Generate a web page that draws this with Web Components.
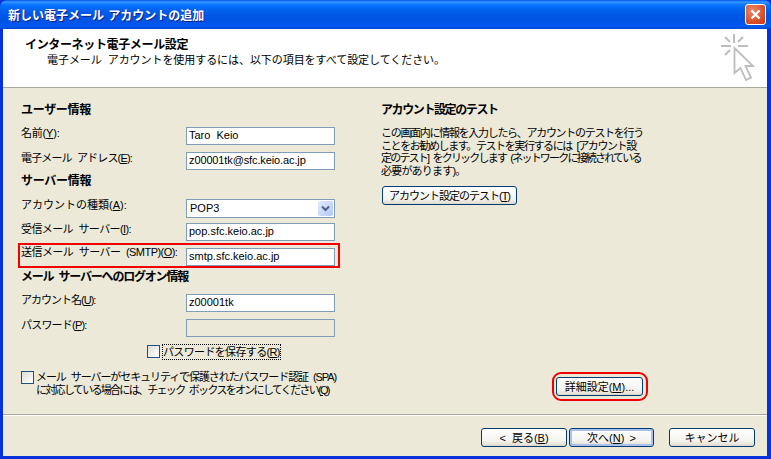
<!DOCTYPE html>
<html><head><meta charset="utf-8"><style>
html,body{margin:0;padding:0;background:#0831d9}
body{width:771px;height:459px;overflow:hidden;font:11px/14px "Liberation Sans","Noto Sans CJK JP",sans-serif;color:#000;word-spacing:3px}
</style></head><body>
<xp-dialog>
  <span slot="title">新しい電子メール アカウントの追加</span>
  <span slot="heading">インターネット電子メール設定</span>
  <span slot="sub">電子メール アカウントを使用するには、以下の項目をすべて設定してください。</span>
  <account-form slot="left"></account-form>
  <test-panel slot="right"></test-panel>
  <xp-button slot="footer" style="--w:86px">&lt; 戻る(<u>B</u>)</xp-button>
  <xp-button slot="footer" default style="--w:85px;margin-left:2px;word-spacing:2px">次へ(<u>N</u>) &gt;</xp-button>
  <xp-button slot="footer" style="--w:86px;margin-left:15px">キャンセル</xp-button>
</xp-dialog>
<script>
function def(name, html){
  customElements.define(name, class extends HTMLElement{
    constructor(){super();this.attachShadow({mode:'open'}).innerHTML=html;}
  });
}
def('xp-dialog',`<style>
:host{display:flex;flex-direction:column;width:771px;height:459px;box-sizing:border-box;background:#0831d9;border-radius:7px 7px 0 0;overflow:hidden}
.bar{flex:none;height:29px;box-sizing:border-box;display:flex;align-items:center;justify-content:space-between;padding:0 5px 0 8px;color:#fff;font-size:12px;font-weight:700;word-spacing:1px;text-shadow:1px 1px 0 #0f1f8f;
background:linear-gradient(#0058ee 0,#3593ff 2px,#288eff 3px,#127dff 4px,#036ffc 6px,#0262ee 10px,#0057e5 15px,#0054e3 20px,#0055eb 24px,#005bf5 26px,#0252d8 28px,#003dd7 29px)}
.bar>slot{display:block;padding-top:2px}
.x{width:21px;height:21px;box-sizing:border-box;border:1px solid #fff;border-radius:3px;background:radial-gradient(circle at 35% 30%,#e98a6e,#d9512b 60%,#c23a13);display:flex;align-items:center;justify-content:center}
.main{flex:1;display:flex;flex-direction:column;margin:0 4px 3px 3px;background:#ece9d8;min-height:0}
.head{flex:none;height:59px;box-sizing:border-box;background:#fff;border-bottom:1px solid #aca899;position:relative;padding:9px 0 0 22px;line-height:14px}
.head .t{font-weight:700;font-size:12px;letter-spacing:-.35px;display:block;height:14px}
.head .s{display:block;padding-left:22px;margin-top:1px;letter-spacing:-.06px}
.head svg{position:absolute;left:717px;top:4px}
.body{flex:1;display:flex;margin-top:1px;min-height:0}
.l{flex:none;width:378px}
.r{flex:1}
.foot{flex:none;height:42px;box-sizing:border-box;border-top:1px solid #aca899;box-shadow:inset 0 1px 0 #fff;padding:13px 12px 0 0;display:flex;justify-content:flex-end;align-items:flex-start}
</style>
<div class="bar"><slot name="title"></slot><div class="x"><svg width="13" height="13" viewBox="0 0 13 13"><path d="M2.5 2.5l8 8M10.500 2.500l-8 8" stroke="#fff" stroke-width="2.4" fill="none"/></svg></div></div>
<div class="main">
 <div class="head"><span class="t"><slot name="heading"></slot></span><span class="s"><slot name="sub"></slot></span>
  <svg width="40" height="52" viewBox="0 0 40 52" fill="none" stroke="#bdbdbd" stroke-width="2"><path d="M14 1v9M1 13h10M18 13h10M5 4l5 5M23 4l-5 5M5 22l5-5"/><path d="M14.500 15v25l6-5 5.500 12 5-2.500-5.500-11.500h7.500z" stroke-width="1.800"/></svg>
 </div>
 <div class="body"><div class="l"><slot name="left"></slot></div><div class="r"><slot name="right"></slot></div></div>
 <div class="foot"><slot name="footer"></slot></div>
</div>`);
def('xp-button',`<style>
:host{display:inline-flex;align-items:center;justify-content:center;width:var(--w,86px);height:19px;box-sizing:border-box;border:1px solid #003c74;border-radius:3px;background:linear-gradient(#fff,#f4f3ee 70%,#e3e0d3 95%,#d6d0c5);line-height:14px;white-space:nowrap}
:host([default]){box-shadow:inset 0 0 0 2px #a9c2ea}
</style><slot></slot>`);
def('form-row',`<style>
:host{display:flex;height:18px;position:relative;margin-left:18px}
:host([hl])::after{content:"";position:absolute;left:-3px;top:-5px;width:322px;height:25px;box-sizing:border-box;border:2px solid #f00000;pointer-events:none}
.lb{flex:none;width:165px;white-space:nowrap;line-height:14px;margin-top:var(--lb,-1px);letter-spacing:var(--ls,0)}
.f{flex:none;width:149px;box-sizing:border-box;border:1px solid #7f9db9;background:#fff;height:18px;line-height:15px;padding-left:2px;white-space:nowrap;position:relative;display:block}
:host([disabled]) .f{background:#ece9d8}
:host([combo]) .f{height:19px;padding-left:3px;line-height:16px}
.c{display:none;position:absolute;right:1px;top:1px;width:15px;height:15px;border-radius:2px;background:linear-gradient(135deg,#e1eafe,#b5c8f5)}
:host([combo]) .c{display:block}
</style><span class="lb"><slot name="label"></slot></span><span class="f"><slot></slot><span class="c"><svg width="15" height="15" viewBox="0 0 15 15"><path d="M4 5.500l3.500 3.500 3.500-3.500" fill="none" stroke="#4d6185" stroke-width="2"/></svg></span></span>`);
def('xp-check',`<style>
:host{display:flex;align-items:flex-start}
.b{flex:none;width:13px;height:13px;box-sizing:border-box;border:1px solid #1c5180;background:linear-gradient(135deg,#dcdcd7,#fff);margin-right:var(--g,2px)}
.t{white-space:nowrap;line-height:var(--lh,14px)}
:host([focus]) .t{outline:1px dotted #000;outline-offset:0}
</style><span class="b"></span><span class="t"><slot></slot></span>`);
def('account-form',`<style>
:host{display:block;width:332px;padding-top:14px}
h3{font-size:12px;line-height:14px;font-weight:700;letter-spacing:-.3px;margin:0 0 0 18px;height:14px}
</style>
<h3>ユーザー情報</h3>
<form-row style="margin-top:10px;--ls:-.2px"><span slot="label">名前(<u>Y</u>):</span>Taro Keio</form-row>
<form-row style="margin-top:7px;--ls:-.85px"><span slot="label">電子メール アドレス(<u>E</u>):</span><span style="letter-spacing:-.12px">z00001tk@sfc.keio.ac.jp</span></form-row>
<h3 style="margin-top:4px">サーバー情報</h3>
<form-row combo style="margin-top:11px;height:19px"><span slot="label">アカウントの種類(<u>A</u>):</span>POP3</form-row>
<form-row style="margin-top:5px;--ls:-.6px"><span slot="label">受信メール サーバー(<u>I</u>):</span>pop.sfc.keio.ac.jp</form-row>
<form-row hl style="margin-top:7px;--ls:-.55px;--lb:-3px"><span slot="label">送信メール サーバー (SMTP)(<u>O</u>):</span>smtp.sfc.keio.ac.jp</form-row>
<h3 style="margin-top:4px;letter-spacing:-1.2px">メール サーバーへのログオン情報</h3>
<form-row style="margin-top:10px;--ls:-1px"><span slot="label">アカウント名(<u>U</u>):</span>z00001tk</form-row>
<form-row disabled style="margin-top:7px;--ls:-.8px"><span slot="label">パスワード(<u>P</u>):</span></form-row>
<xp-check focus style="margin:8px 0 0 144px;--g:3px;letter-spacing:-.65px">パスワードを保存する(<u>R</u>)</xp-check>
<xp-check style="margin:12px 0 0 18px;--lh:12.500px"><span style="letter-spacing:-1.08px">メール サーバーがセキュリティで保護されたパスワード認証 (SPA)</span><br><span style="letter-spacing:-1.7px">に対応している場合には、チェック ボックスをオンにしてください(<u>Q</u>)</span></xp-check>`);
def('test-panel',`<style>
:host{display:block;position:relative;height:100%;padding-top:14px;box-sizing:border-box}
h3{font-size:12px;line-height:14px;font-weight:700;letter-spacing:-1.4px;margin:0;height:14px}
p{margin:10px 0 9px;line-height:12.500px;white-space:nowrap}
p span{display:block}
.adv{position:absolute;left:175px;top:288px;display:flex}
.ring{position:absolute;left:-4px;top:-5px;width:96px;height:29px;box-sizing:border-box;border:2px solid #f00000;border-radius:9px;pointer-events:none}
.tb{display:flex;margin-left:1px}
</style>
<h3>アカウント設定のテスト</h3>
<p><span style="letter-spacing:-1.3px">この画面内に情報を入力したら、アカウントのテストを行う</span><span style="letter-spacing:-1.4px">ことをお勧めします。テストを実行するには [アカウント設</span><span style="letter-spacing:-1.8px">定のテスト] をクリックします (ネットワークに接続されている</span><span style="letter-spacing:-.8px">必要があります)。</span></p>
<div class="tb"><xp-button style="--w:135px;letter-spacing:-1px">アカウント設定のテスト(<u>T</u>)</xp-button></div>
<div class="adv"><xp-button style="--w:87px">詳細設定(<u>M</u>)...</xp-button><div class="ring"></div></div>`);
</script>
</body></html>
